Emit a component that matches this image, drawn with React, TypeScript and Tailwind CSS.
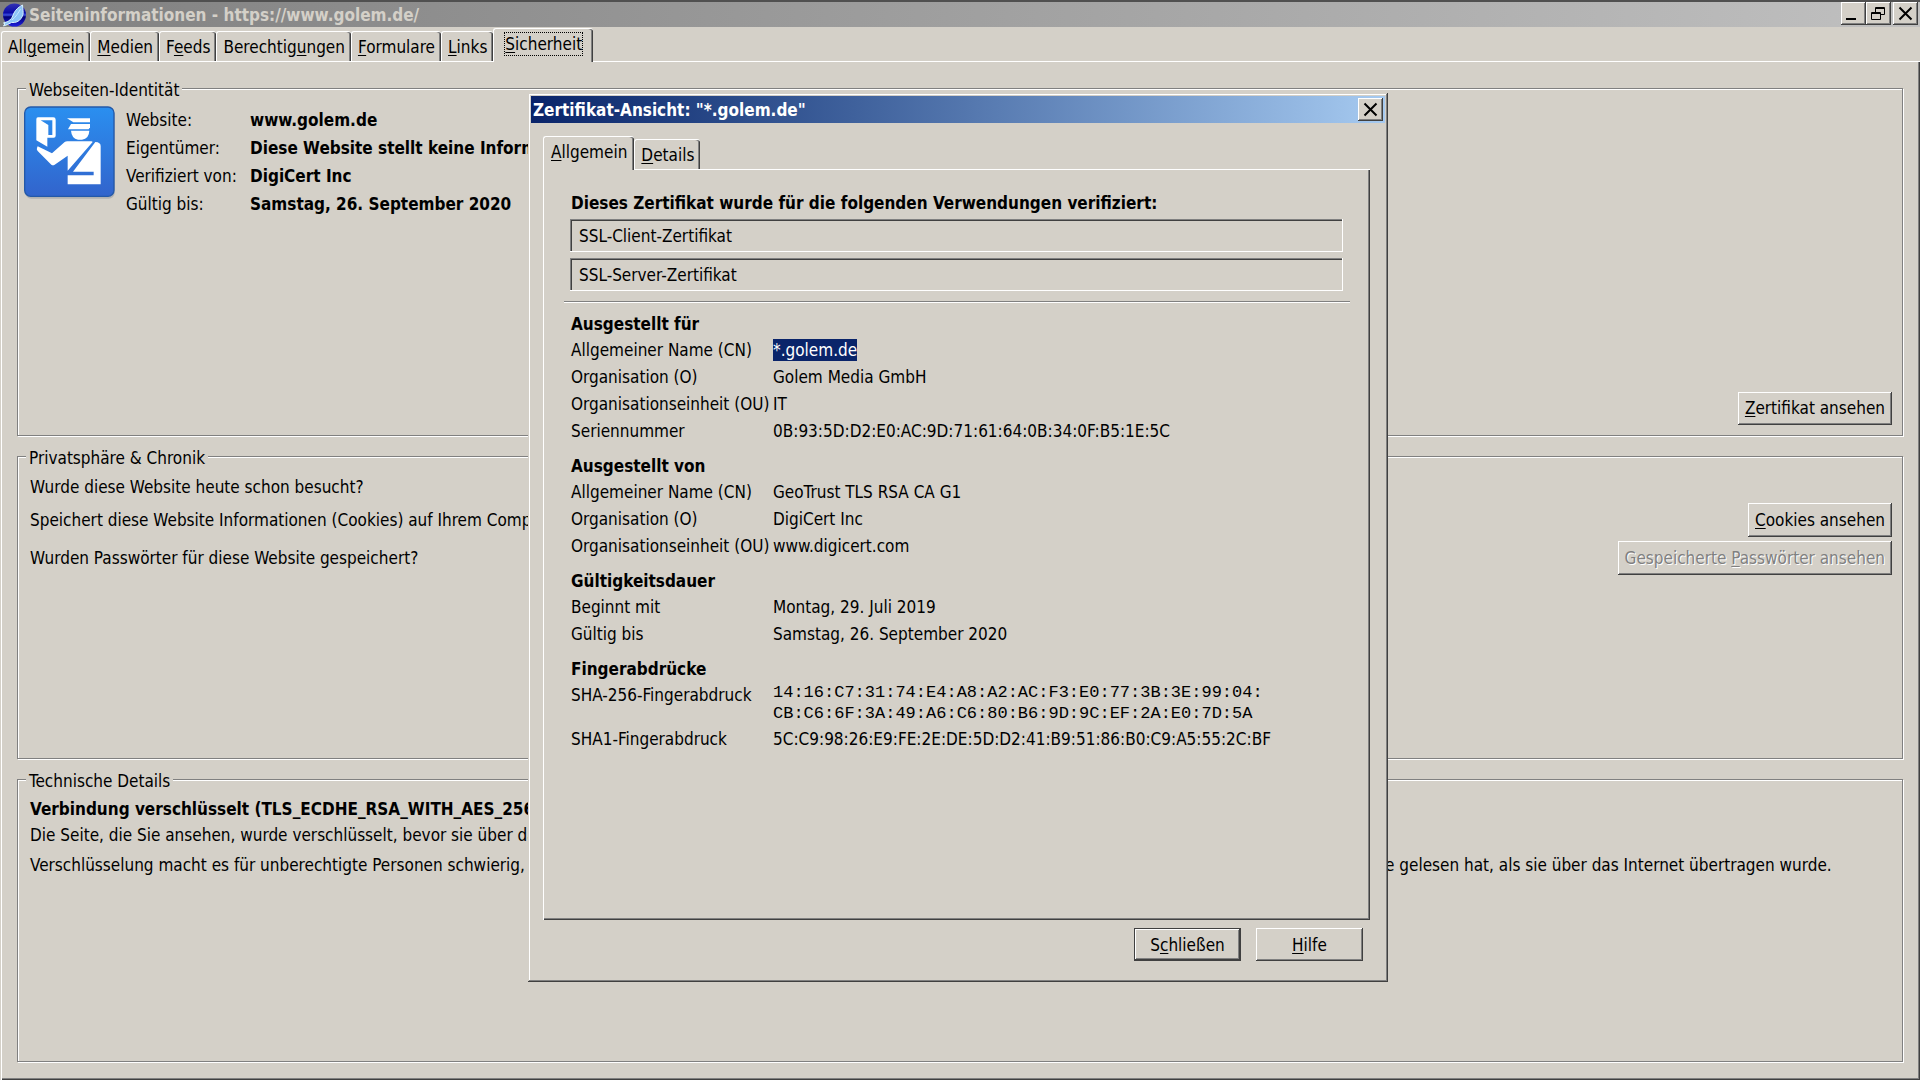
import type { ReactNode } from "react";

const RAISED =
  "bg-[#d4d0c8] shadow-[inset_-1px_-1px_0_#404040,inset_1px_1px_0_#fff,inset_-2px_-2px_0_#808080]";
const SUNKEN =
  "bg-[#d4d0c8] shadow-[inset_-1px_-1px_0_#fff,inset_1px_1px_0_#808080,inset_2px_2px_0_#404040]";
const DEFAULT_BUTTON =
  "bg-[#d4d0c8] border border-[#404040] shadow-[inset_-1px_-1px_0_#404040,inset_1px_1px_0_#fff,inset_-2px_-2px_0_#808080]";

/* Label whose access key is underlined; the key is marked with "&". */
function Keyed({ text }: { text: string }) {
  const at = text.indexOf("&");
  if (at < 0) return <>{text}</>;
  return (
    <>
      {text.slice(0, at)}
      <span className="underline decoration-1 underline-offset-2">{text[at + 1]}</span>
      {text.slice(at + 2)}
    </>
  );
}

function CaptionButton({ label, children }: { label: string; children: ReactNode }) {
  return (
    <button type="button" aria-label={label} className={`flex h-[23px] w-[25px] items-center justify-center ${RAISED}`}>
      {children}
    </button>
  );
}

function CloseGlyph() {
  return (
    <svg width="15" height="15" viewBox="0 0 15 15" className="mr-px" stroke="#000" strokeWidth="2">
      <path d="M1.5 1.5 13.5 13.5M13.5 1.5 1.5 13.5" />
    </svg>
  );
}

function Tab({ text, selected, focused }: { text: string; selected?: boolean; focused?: boolean }) {
  return (
    <button
      type="button"
      role="tab"
      aria-selected={!!selected}
      className={
        selected
          ? `relative -mb-px flex h-[34px] items-start rounded-t-[3px] border-t border-l border-white bg-[#d4d0c8] pt-[3px] shadow-[inset_-1px_0_0_#404040,inset_-2px_0_0_#808080] ${
              focused ? "px-[11px]" : "px-[7px]"
            }`
          : "flex h-[30px] items-start rounded-t-[3px] border-t border-l border-white bg-[#d4d0c8] px-1.5 pt-[3px] shadow-[inset_-1px_0_0_#404040,inset_-2px_0_0_#808080]"
      }
    >
      <span className={focused ? "mt-px leading-[22px] outline-1 outline-dotted outline-black" : "leading-6"}>
        <Keyed text={text} />
      </span>
    </button>
  );
}

function Group({ title, className, children }: { title: string; className: string; children: ReactNode }) {
  return (
    <fieldset
      className={`flex min-h-0 min-w-0 flex-col border border-[#808080] shadow-[1px_1px_0_#fff,inset_1px_1px_0_#fff] ${className}`}
    >
      <legend className="ml-2 h-[21px] bg-[#d4d0c8] px-[3px] leading-6">{title}</legend>
      {children}
    </fieldset>
  );
}

function AppIcon() {
  return (
    <svg width="24" height="24" viewBox="0 0 24 24" className="shrink-0" aria-hidden="true">
      <defs>
        <linearGradient id="sea" x1="0" y1="0" x2="0" y2="1">
          <stop offset="0" stopColor="#3434b4" />
          <stop offset="0.4" stopColor="#0a0aa8" />
          <stop offset="0.5" stopColor="#3c50e0" />
          <stop offset="0.58" stopColor="#000078" />
          <stop offset="1" stopColor="#2020e0" />
        </linearGradient>
      </defs>
      <circle cx="12.500" cy="12" r="11.500" fill="url(#sea)" />
      <path
        d="M20.500 2c-3 1.500-7 4.500-8.500 8-1 2-1.500 4-2.500 5.500L6 18.500 1.500 20l1.500.8L1.500 23l4-1.500 4-2c4 .5 7.500-1 9.500-4 2-2.500 2.500-5 2-8z"
        fill="#8cc4f6"
        stroke="#d7f1ff"
        strokeWidth="1"
      />
      <path d="M18.500 6c-2 4-5 8-8.500 11" stroke="#c4e4ff" fill="none" />
    </svg>
  );
}

function IdentityIcon() {
  return (
    <svg width="92" height="94" viewBox="0 0 276 282" aria-hidden="true">
      <defs>
        <linearGradient id="badge" x1="0" y1="0" x2="0" y2="1">
          <stop offset="0" stopColor="#2a8ff0" />
          <stop offset="1" stopColor="#3264cc" />
        </linearGradient>
      </defs>
      <rect x="4" y="8" width="268" height="270" rx="18" fill="#8f949c" opacity="0.5" />
      <rect x="2" y="3" width="268" height="268" rx="18" fill="url(#badge)" stroke="#2459a8" strokeWidth="4" />
      <g fill="#fff">
        <path fillRule="evenodd" d="M42 34h46q7 0 7 7v48q0 6-6 6H70v27L37 103V40q0-6 5-6zm8 9 23 14v30h12V43z" />
        <path d="M129 37h69v12h-50z" />
        <path d="M141 54h57v10l-4 6h-62z" />
        <path d="M141 74h55q-1 24-22 27h-12q-19-3-21-27z" />
        <path d="M41 121l43 21 38-34q3-2 8-2h72q3 0 4 2l-75 86v-45l-39 27q-5 3-10 0l-41-41q-4-4-2-9z" />
        <path d="M214 108q16 1 16 12v115H131v-27h78v-11h-62z" />
      </g>
    </svg>
  );
}

const identity = [
  ["Website:", "www.golem.de"],
  ["Eigentümer:", "Diese Website stellt keine Informationen über den Besitzer zur Verfügung."],
  ["Verifiziert von:", "DigiCert Inc"],
  ["Gültig bis:", "Samstag, 26. September 2020"],
];

const sections: { title: string; rows: [string, string][] }[] = [
  {
    title: "Ausgestellt für",
    rows: [
      ["Allgemeiner Name (CN)", "*.golem.de"],
      ["Organisation (O)", "Golem Media GmbH"],
      ["Organisationseinheit (OU)", "IT"],
      ["Seriennummer", "0B:93:5D:D2:E0:AC:9D:71:61:64:0B:34:0F:B5:1E:5C"],
    ],
  },
  {
    title: "Ausgestellt von",
    rows: [
      ["Allgemeiner Name (CN)", "GeoTrust TLS RSA CA G1"],
      ["Organisation (O)", "DigiCert Inc"],
      ["Organisationseinheit (OU)", "www.digicert.com"],
    ],
  },
  {
    title: "Gültigkeitsdauer",
    rows: [
      ["Beginnt mit", "Montag, 29. Juli 2019"],
      ["Gültig bis", "Samstag, 26. September 2020"],
    ],
  },
];

function SectionTitle({ children }: { children: ReactNode }) {
  return <h3 className="font-bold leading-[25px]">{children}</h3>;
}

function Row({ label, children }: { label: string; children: ReactNode }) {
  return (
    <div className="flex leading-[27px]">
      <dt className="w-[202px] shrink-0">{label}</dt>
      <dd>{children}</dd>
    </div>
  );
}

function CertificateDialog() {
  return (
    <section
      role="dialog"
      aria-label="Zertifikat-Ansicht"
      className="absolute top-[93px] left-[528px] flex h-[889px] w-[860px] flex-col bg-[#d4d0c8] p-[3px] shadow-[inset_-1px_-1px_0_#404040,inset_1px_1px_0_#d4d0c8,inset_-2px_-2px_0_#808080,inset_2px_2px_0_#fff]"
    >
      <header className="flex h-[27px] shrink-0 items-center justify-between bg-linear-to-r from-[#0a246a] to-[#a6caf0] pr-0.5 pl-0.5">
        <h2 className="font-bold text-white">Zertifikat-Ansicht: "*.golem.de"</h2>
        <CaptionButton label="Schließen">
          <CloseGlyph />
        </CaptionButton>
      </header>

      <div className="flex flex-1 flex-col px-3 pt-[13px]">
        <div role="tablist" className="flex items-end">
          <Tab text="&Allgemein" selected />
          <Tab text="&Details" />
        </div>
        <div className="mr-[3px] h-[751px] border-t border-l border-white px-5 shadow-[inset_-1px_-1px_0_#404040,inset_-2px_-2px_0_#808080]">
          <div className="px-[7px] pt-[21px]">
            <h3 className="font-bold leading-6">Dieses Zertifikat wurde für die folgenden Verwendungen verifiziert:</h3>
          </div>
          <div className="flex flex-col gap-1.5 pt-1 pr-[7px] pl-1.5">
            <div className={`h-[33px] px-[9px] leading-[34px] ${SUNKEN}`}>SSL-Client-Zertifikat</div>
            <div className={`h-[33px] px-[9px] leading-[34px] ${SUNKEN}`}>SSL-Server-Zertifikat</div>
          </div>
          <hr className="mt-2.5 h-0.5 border-t border-b border-t-[#808080] border-b-white" />
          <div className="flex flex-col gap-[9px] px-[7px] pt-[9px]">
            {sections.map((s, i) => (
              <section key={s.title}>
                <SectionTitle>{s.title}</SectionTitle>
                <dl>
                  {s.rows.map(([label, value], j) => (
                    <Row key={label} label={label}>
                      {i === 0 && j === 0 ? (
                        <span className="inline-block bg-[#0a246a] leading-[22px] text-white">{value}</span>
                      ) : (
                        value
                      )}
                    </Row>
                  ))}
                </dl>
              </section>
            ))}
            <section>
              <SectionTitle>Fingerabdrücke</SectionTitle>
              <dl className="flex flex-col gap-0.5">
                <Row label="SHA-256-Fingerabdruck">
                  <span className="block font-['Liberation_Mono',monospace] leading-[21px]">
                    14:16:C7:31:74:E4:A8:A2:AC:F3:E0:77:3B:3E:99:04:
                    <br />
                    CB:C6:6F:3A:49:A6:C6:80:B6:9D:9C:EF:2A:E0:7D:5A
                  </span>
                </Row>
                <Row label="SHA1-Fingerabdruck">5C:C9:98:26:E9:FE:2E:DE:5D:D2:41:B9:51:86:B0:C9:A5:55:2C:BF</Row>
              </dl>
            </section>
          </div>
        </div>
        <div className="mr-2.5 flex justify-end gap-[15px] pt-2">
          <button type="button" className={`h-[33px] w-[107px] ${DEFAULT_BUTTON}`}>
            <Keyed text="S&chließen" />
          </button>
          <button type="button" className={`h-[33px] w-[107px] ${RAISED}`}>
            <Keyed text="&Hilfe" />
          </button>
        </div>
      </div>
    </section>
  );
}

export default function App() {
  return (
    <div className="relative flex h-screen flex-col overflow-hidden bg-[#d4d0c8] font-['DejaVu_Sans_Condensed','DejaVu_Sans',sans-serif] text-[17px] leading-6 whitespace-nowrap text-black">
      <header className="flex h-[27px] shrink-0 items-center justify-between border-t-2 border-[#505050] bg-linear-to-r from-[#808080] to-[#c0c0c0] px-0.5">
        <div className="flex items-center gap-[3px]">
          <AppIcon />
          <h1 className="font-bold text-[#d4d0c8]">Seiteninformationen - https://www.golem.de/</h1>
        </div>
        <div className="flex pb-0.5">
          <CaptionButton label="Minimieren">
            <svg width="15" height="15" viewBox="0 0 15 15">
              <path d="M0 12h10v2H0z" />
            </svg>
          </CaptionButton>
          <CaptionButton label="Wiederherstellen">
            <svg width="15" height="15" viewBox="0 0 15 15" fill="none" stroke="#000">
              <path d="M4.500 6V1.500h9V8.500H10M4 2.500h10M0.500 6.500h9v7h-9zM0 7.500h10" />
            </svg>
          </CaptionButton>
          <span className="w-0.5" />
          <CaptionButton label="Fenster schließen">
            <CloseGlyph />
          </CaptionButton>
        </div>
      </header>

      <div role="tablist" className="flex h-[34px] shrink-0 items-end pl-px">
        <Tab text="All&gemein" />
        <Tab text="&Medien" />
        <Tab text="F&eeds" />
        <Tab text="Berechtig&ungen" />
        <Tab text="&Formulare" />
        <Tab text="&Links" />
        <Tab text="&Sicherheit" selected focused />
      </div>

      <main className="ml-px flex min-h-0 flex-1 flex-col gap-2.5 border-t border-l border-white pt-4 pr-[17px] pb-[18px] pl-[15px] shadow-[inset_-1px_-1px_0_#404040,inset_-2px_-2px_0_#808080]">
        <Group title="Webseiten-Identität" className="flex-[358_1_0px]">
          <div className="flex flex-1 items-start pt-[7px] pr-2.5 pb-2.5 pl-1.5">
            <IdentityIcon />
            <dl className="flex-1 pl-2.5">
              {identity.map(([label, value]) => (
                <div key={label} className="flex leading-7">
                  <dt className="w-[124px] shrink-0">{label}</dt>
                  <dd className="font-bold">{value}</dd>
                </div>
              ))}
            </dl>
            <button type="button" className={`h-[33px] self-end px-[7px] ${RAISED}`}>
              <Keyed text="&Zertifikat ansehen" />
            </button>
          </div>
        </Group>

        <Group title="Privatsphäre &amp; Chronik" className="flex-[313_1_0px]">
          <div className="flex flex-col gap-1 pt-2 pr-2.5 pl-3">
            <p>Wurde diese Website heute schon besucht?</p>
            <div className="flex items-center justify-between">
              <p>Speichert diese Website Informationen (Cookies) auf Ihrem Computer?</p>
              <button type="button" className={`h-[34px] px-[7px] ${RAISED}`}>
                <Keyed text="&Cookies ansehen" />
              </button>
            </div>
            <div className="flex items-center justify-between">
              <p>Wurden Passwörter für diese Website gespeichert?</p>
              <button
                type="button"
                disabled
                className={`h-[34px] px-[7px] text-[#808080] [text-shadow:1px_1px_0_#fff] ${RAISED}`}
              >
                <Keyed text="Gespeicherte &Passwörter ansehen" />
              </button>
            </div>
          </div>
        </Group>

        <Group title="Technische Details" className="flex-[293_1_0px]">
          <div className="pt-1.5 pl-3">
            <p className="font-bold leading-[26px]">
              Verbindung verschlüsselt (TLS_ECDHE_RSA_WITH_AES_256_GCM_SHA384, 256-Bit-Schlüssel, TLS 1.2)
            </p>
            <p className="leading-[26px]">
              Die Seite, die Sie ansehen, wurde verschlüsselt, bevor sie über das Internet übermittelt wurde.
            </p>
            <p className="pt-1 leading-[26px]">
              Verschlüsselung macht es für unberechtigte Personen schwierig, zwischen Computern übertragene
              Informationen zu sehen. Daher ist es unwahrscheinlich, dass jemand die Seite gelesen hat, als sie über
              das Internet übertragen wurde.
            </p>
          </div>
        </Group>
      </main>

      <CertificateDialog />
    </div>
  );
}
